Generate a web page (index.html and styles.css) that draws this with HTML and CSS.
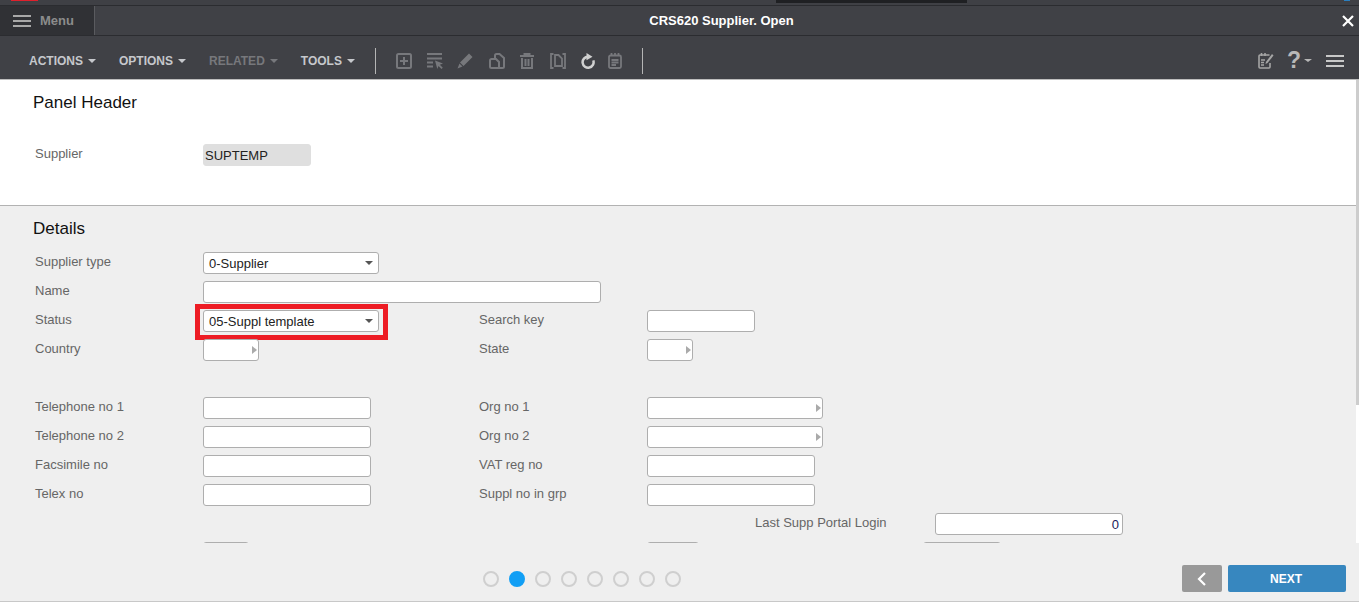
FILE: index.html
```html
<!DOCTYPE html>
<html lang="en">
<head>
  <meta charset="utf-8">
  <title>CRS620 Supplier. Open</title>
  <link rel="stylesheet" href="styles.css">
</head>
<body>
  <div class="topstrip">
    <span class="topstrip-red"></span>
    <span class="topstrip-tab"></span>
    <span class="topstrip-blue"></span>
  </div>

  <header class="titlebar">
    <div class="menu-btn">
      <span class="burger"><i></i><i></i><i></i></span>
      <span>Menu</span>
    </div>
    <div class="title">CRS620 Supplier. Open</div>
    <svg class="close" width="12" height="12" viewBox="0 0 12 12"><path d="M1 1l10 10M11 1L1 11" stroke="#fff" stroke-width="2.2"/></svg>
  </header>

  <nav class="toolbar">
    <a class="tool-menu">ACTIONS<b class="caret"></b></a>
    <a class="tool-menu">OPTIONS<b class="caret"></b></a>
    <a class="tool-menu disabled">RELATED<b class="caret"></b></a>
    <a class="tool-menu">TOOLS<b class="caret"></b></a>
    <span class="divider"></span>
    <div class="tool-icons">
      <svg width="16" height="16" viewBox="0 0 16 16" fill="none" stroke="#77787c" stroke-width="2"><rect x="1" y="1" width="14" height="14" rx="1.5"/><path d="M4 8h8M8 4v8"/></svg>
      <svg width="16" height="16" viewBox="0 0 16 16" fill="none" stroke="#77787c" stroke-width="2"><path d="M0 1h15M0 5.500h15M0 9.500h6M0 13.500h6"/><path d="M8 7.500l8 3-3.200 1.200 3 3-1.300 1.300-3-3L10.300 16z" fill="#77787c" stroke="none"/></svg>
      <svg class="icon-pencil" width="16" height="16" viewBox="0 0 16 16" fill="#77787c"><path d="M12 .5L15.500 4 6.500 13 3 9.500zM2.500 10.500L5.500 13.500.5 15.500z"/></svg>
      <svg width="16" height="16" viewBox="0 0 16 16" fill="none" stroke="#77787c" stroke-width="2"><path d="M6 5V2.500A1.500 1.500 0 0 1 7.500 1H10.500L15 5v8.500a1.500 1.500 0 0 1-1.500 1.500H11"/><path d="M2.500 6H7l3 3v6H2.500A1.500 1.500 0 0 1 1 13.500v-6A1.500 1.500 0 0 1 2.500 6z"/></svg>
      <svg class="icon-trash" width="14" height="16" viewBox="0 0 14 16" fill="none" stroke="#77787c" stroke-width="2"><path d="M0 3h14M4.500 3V1h5v2"/><path d="M2 5v10h10V5M5.500 6v7M8.500 6v7"/></svg>
      <svg class="icon-doc" width="16" height="16" viewBox="0 0 16 16" fill="none" stroke="#77787c" stroke-width="1.800"><path d="M3.500 1H1v14h2.500M12.500 1H15v14h-2.500"/><path d="M5 2h3.500L12 5.500V13H5z"/></svg>
      <svg class="icon-refresh" width="15" height="16" viewBox="0 0 15 16" fill="none" stroke="#d0d0d0" stroke-width="2.500"><path d="M8 3.700a5.500 5.500 0 1 0 5.300 3.700"/><path d="M6.500 0l6 3.700-6 3.600z" fill="#d0d0d0" stroke="none"/></svg>
      <svg width="14" height="16" viewBox="0 0 14 16" fill="none" stroke="#77787c" stroke-width="1.800"><rect x="1" y="2.500" width="12" height="12.500" rx="1.500"/><path d="M3.500 0v3M7 0v3M10.500 0v3M3.500 7h7M3.500 9.500h7M3.500 12h4.500"/></svg>
    </div>
    <span class="divider divider-end"></span>
    <div class="tool-right">
      <svg width="17" height="16" viewBox="0 0 17 16" fill="none" stroke="#a5a5a5" stroke-width="1.600"><path d="M12 10v4a1 1 0 0 1-1 1H2a1 1 0 0 1-1-1V3a1 1 0 0 1 1-1h9.500"/><path d="M3.500 0v3M7 0v3M3 7h4M3 9.500h3M3 12h3"/><path d="M15.500 2.500L9.500 10 7.500 11l.6-2.200L14 1z" fill="#a5a5a5" stroke="none"/></svg>
      <span class="help">?<b class="caret"></b></span>
      <span class="burger burger-light"><i></i><i></i><i></i></span>
    </div>
  </nav>

  <main class="content">
    <section class="panel-header">
      <h2>Panel Header</h2>
      <div class="row row-supplier">
        <label>Supplier</label>
        <div class="field field-readonly w108">SUPTEMP</div>
      </div>
    </section>

    <section class="details">
      <h2>Details</h2>
      <div class="row">
        <label>Supplier type</label>
        <div class="field w176 select">0-Supplier<b class="caret"></b></div>
      </div>
      <div class="row">
        <label>Name</label>
        <div class="field w398"></div>
      </div>
      <div class="row">
        <label>Status</label>
        <div class="field w176 select">05-Suppl template<b class="caret"></b><span class="highlight"></span></div>
        <label>Search key</label>
        <div class="field w108"></div>
      </div>
      <div class="row">
        <label>Country</label>
        <div class="field w56 browse"><b class="arrow"></b></div>
        <label>State</label>
        <div class="field w46 browse"><b class="arrow"></b></div>
      </div>
      <div class="row"></div>
      <div class="row">
        <label>Telephone no 1</label>
        <div class="field w168"></div>
        <label>Org no 1</label>
        <div class="field w176 browse"><b class="arrow"></b></div>
      </div>
      <div class="row">
        <label>Telephone no 2</label>
        <div class="field w168"></div>
        <label>Org no 2</label>
        <div class="field w176 browse"><b class="arrow"></b></div>
      </div>
      <div class="row">
        <label>Facsimile no</label>
        <div class="field w168"></div>
        <label>VAT reg no</label>
        <div class="field w168"></div>
      </div>
      <div class="row">
        <label>Telex no</label>
        <div class="field w168"></div>
        <label>Suppl no in grp</label>
        <div class="field w168"></div>
      </div>
      <div class="row row-far">
        <label>Last Supp Portal Login</label>
        <div class="field w188 number">0</div>
      </div>
      <div class="row row-cut">
        <span class="field w46"></span>
        <span class="field w52"></span>
        <span class="field w78"></span>
      </div>
    </section>
    <div class="scrollbar"></div>
  </main>

  <footer class="footer">
    <div class="dots">
      <i></i><i class="active"></i><i></i><i></i><i></i><i></i><i></i><i></i>
    </div>
    <button class="btn-back"><svg width="10" height="14" viewBox="0 0 10 14" fill="none" stroke="#fff" stroke-width="2.2"><path d="M8 1L2 7l6 6"/></svg></button>
    <button class="btn-next">NEXT</button>
  </footer>
</body>
</html>
```

FILE: styles.css
```css
* {
  box-sizing: border-box;
}

html,
body {
  height: 100%;
}

body {
  display: flex;
  flex-direction: column;
  height: 602px;
  margin: 0;
  overflow: hidden;
  background: #efefef;
  font-family: "Liberation Sans", Arial, sans-serif;
  font-size: 13px;
  color: #222;
}

/* top strip of the host page, mostly cut off */
.topstrip {
  display: flex;
  flex: none;
  height: 6px;
  background: #3f4045;
  border-bottom: 1px solid #2b2c30;
}

.topstrip-red {
  width: 27px;
  height: 1px;
  margin-left: 11px;
  background: #e0202c;
}

.topstrip-tab {
  width: 191px;
  height: 3px;
  margin-left: 738px;
  background: #1f2023;
}

.topstrip-blue {
  width: 6px;
  height: 1px;
  margin-left: 377px;
  background: #2a7fc0;
}

.titlebar {
  display: flex;
  flex: none;
  align-items: center;
  height: 30px;
  background: #404146;
  border-bottom: 1px solid #2b2c30;
}

.menu-btn {
  display: flex;
  align-items: center;
  flex: none;
  gap: 9px;
  width: 95px;
  height: 100%;
  padding-left: 13px;
  background: #303135;
  border-right: 1px solid #5a5b5f;
  font-weight: bold;
  color: #8c8c8c;
}

.burger {
  display: flex;
  flex-direction: column;
  justify-content: space-between;
  width: 18px;
  height: 12px;
}

.burger i {
  display: block;
  height: 2px;
  background: #a8a8a8;
}

.burger-light i {
  background: #c8c8c8;
}

.title {
  flex: 1;
  padding-left: 6px;
  text-align: center;
  font-weight: bold;
  color: #fff;
}

.close {
  margin-right: 5px;
}

.toolbar {
  display: flex;
  flex: none;
  align-items: center;
  height: 44px;
  padding: 6px 0 0 29px;
  background: #404146;
  border-bottom: 1px solid #bdbdbd;
}

.tool-menu {
  display: flex;
  align-items: center;
  margin-right: 23px;
  font-size: 12px;
  font-weight: bold;
  color: #c6c8cc;
}

.tool-menu.disabled {
  color: #77787c;
}

.caret {
  display: inline-block;
  width: 0;
  height: 0;
  margin-left: 5px;
  border-top: 4px solid currentColor;
  border-left: 4px solid transparent;
  border-right: 4px solid transparent;
}

.divider {
  width: 1px;
  height: 26px;
  margin-left: -3px;
  background: #b5b5b5;
}

.divider-end {
  margin-left: 20px;
}

.tool-icons {
  display: flex;
  align-items: center;
  gap: 15px;
  margin-left: 20px;
}

.icon-pencil {
  margin-left: -1px;
  margin-right: 1px;
}

.icon-trash {
  margin-right: 1px;
}

.icon-doc {
  margin-right: -1px;
}

.icon-refresh {
  margin-right: -2px;
}

.tool-right {
  display: flex;
  align-items: center;
  margin-left: auto;
  padding-right: 15px;
}

.help {
  display: flex;
  align-items: center;
  margin-left: 12px;
  margin-right: 14px;
  font-size: 23px;
  font-weight: bold;
  color: #b8b8b8;
}

.help .caret {
  margin-left: 3px;
  border-top-width: 3px;
}

.content {
  position: relative;
  flex: none;
  height: 463px;
  overflow: hidden;
  background: #fff;
}

.panel-header {
  height: 126px;
  padding: 13px 33px 0;
  background: #fff;
  border-bottom: 1px solid #b2b2b2;
}

h2 {
  margin: 0;
  font-size: 17px;
  font-weight: normal;
  line-height: 20px;
  color: #111;
}

.details {
  height: 337px;
  margin-right: 3px;
  padding: 13px 0 0 33px;
  background: #efefef;
}

.details h2 {
  margin-bottom: 13px;
}

.row {
  display: grid;
  grid-template-columns: 168px 276px 168px 1fr;
  align-items: start;
  height: 29px;
  padding-left: 2px;
}

.row-supplier {
  margin-top: 31px;
}

.row-far {
  grid-template-columns: 180px 1fr;
  padding-left: 722px;
}

.row-cut {
  grid-template-columns: 444px 276px 1fr;
  padding-left: 170px;
}

label {
  margin-top: 1px;
  line-height: 18px;
  color: #666;
}

.field {
  position: relative;
  display: block;
  height: 22px;
  padding: 0 5px;
  background: #fff;
  border: 1px solid #aeaeae;
  border-radius: 3px;
  line-height: 21px;
  color: #222;
}

.field-readonly {
  background: #dfdfdf;
  border-color: #dfdfdf;
  padding: 0 1px;
}

.number {
  padding-right: 3px;
  text-align: right;
  color: #1a1a5a;
}

.w46 { width: 46px; }
.w52 { width: 52px; }
.w56 { width: 56px; }
.w78 { width: 78px; }
.w108 { width: 108px; }
.w168 { width: 168px; }
.w176 { width: 176px; }
.w188 { width: 188px; }
.w398 { width: 398px; }

.select .caret {
  position: absolute;
  top: 8px;
  right: 5px;
  margin: 0;
  color: #555;
}

.arrow {
  position: absolute;
  top: 6px;
  right: 1px;
  width: 0;
  height: 0;
  border-left: 5px solid #aaa;
  border-top: 4px solid transparent;
  border-bottom: 4px solid transparent;
}

.highlight {
  position: absolute;
  top: -7px;
  left: -9px;
  right: -10px;
  bottom: -9px;
  border: 5px solid #ed1c24;
}

.scrollbar {
  position: absolute;
  top: 0;
  right: 0;
  width: 3px;
  height: 325px;
  background: #cdcdcd;
}

.footer {
  display: flex;
  flex: 1;
  align-items: flex-start;
  padding: 22px 13px 0 483px;
  background: #efefef;
  border-bottom: 1px solid #c8c8c8;
}

.dots {
  display: flex;
  gap: 10px;
  margin-top: 6px;
}

.dots i {
  width: 16px;
  height: 16px;
  border: 2px solid #cfcfcf;
  border-radius: 50%;
}

.dots i.active {
  background: #129ff5;
  border-color: #129ff5;
}

button {
  height: 27px;
  padding: 0;
  border: 0;
  border-radius: 2px;
  font-family: inherit;
  font-size: 12px;
  font-weight: bold;
  color: #fff;
}

.btn-back {
  display: flex;
  align-items: center;
  justify-content: center;
  width: 40px;
  margin-left: auto;
  background: #999;
}

.btn-next {
  width: 118px;
  margin-left: 6px;
  padding-right: 2px;
  background: #3787bf;
}
```
